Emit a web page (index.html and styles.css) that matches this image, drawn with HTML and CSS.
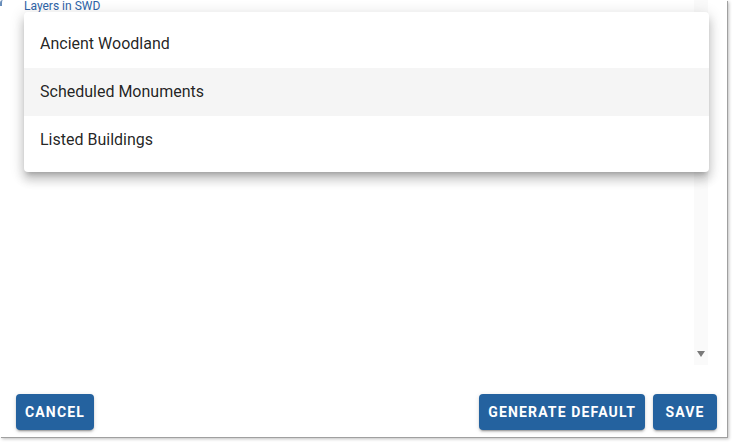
FILE: index.html
```html
<!DOCTYPE html>
<html lang="en">
<head>
<meta charset="utf-8">
<title>Layers in SWD</title>
<link rel="stylesheet" href="styles.css">
</head>
<body>
<div class="dialog">
  <div class="corner-mark"></div>
  <div class="content">
    <div class="field-area">
      <span class="field-label">Layers in SWD</span>
    </div>
    <div class="track">
      <span class="track-arrow"></span>
    </div>
    <ul class="menu">
      <li class="menu-item">Ancient Woodland</li>
      <li class="menu-item is-hover">Scheduled Monuments</li>
      <li class="menu-item">Listed Buildings</li>
    </ul>
  </div>
  <div class="actions">
    <button class="btn">Cancel</button>
    <div class="spacer"></div>
    <button class="btn">Generate Default</button>
    <button class="btn">Save</button>
  </div>
</div>
</body>
</html>
```
FILE: styles.css
```css
html, body {
  margin: 0;
  padding: 0;
  background: #ffffff;
}

body {
  font-family: Roboto, "Liberation Sans", sans-serif;
  width: 734px;
  height: 444px;
  overflow: hidden;
}

.dialog {
  position: relative;
  width: 727px;
  height: 437px;
  background: #ffffff;
  display: flex;
  flex-direction: column;
  box-shadow: 1px 1px 0 #a0a0a0, 2px 2px 3px rgba(0, 0, 0, 0.25);
}

.corner-mark {
  position: absolute;
  left: 0;
  top: 0;
  width: 3px;
  height: 6px;
  border-left: 2px solid #2b5f9e;
  border-top-left-radius: 3px;
  box-sizing: border-box;
  opacity: 0.7;
}

.content {
  position: relative;
  flex: 1;
  display: flex;
  padding: 0 19px 21px 24px;
}

.field-area {
  flex: 1;
}

.field-label {
  display: block;
  font-size: 12px;
  line-height: 12px;
  color: #2e64a8;
}

.track {
  width: 14px;
  background: #fafafa;
  display: flex;
  flex-direction: column;
  justify-content: flex-end;
  align-items: center;
  padding-bottom: 8px;
  box-sizing: border-box;
}

.track-arrow {
  width: 0;
  height: 0;
  border-left: 4px solid transparent;
  border-right: 4px solid transparent;
  border-top: 6px solid #7a7a7a;
}

.menu {
  position: absolute;
  left: 24px;
  top: 12px;
  width: 685px;
  margin: 0;
  padding: 8px 0;
  list-style: none;
  background: #ffffff;
  border-radius: 4px;
  box-shadow: 0 5px 5px -3px rgba(0, 0, 0, 0.2),
              0 8px 10px 1px rgba(0, 0, 0, 0.14),
              0 3px 14px 2px rgba(0, 0, 0, 0.12);
}

.menu-item {
  height: 48px;
  display: flex;
  align-items: center;
  padding: 0 16px 2px;
  box-sizing: border-box;
  font-size: 16px;
  color: rgba(0, 0, 0, 0.87);
}

.menu-item.is-hover {
  background: #f5f5f5;
}

.actions {
  display: flex;
  align-items: center;
  gap: 8px;
  padding: 8px 10px 7px 16px;
}

.spacer {
  flex: 1;
}

.btn {
  height: 36px;
  min-width: 64px;
  padding: 0 9px;
  border: none;
  border-radius: 4px;
  background: #24629f;
  color: #ffffff;
  font-family: Roboto, "Liberation Sans", sans-serif;
  font-size: 14px;
  font-weight: 700;
  letter-spacing: 1.15px;
  text-transform: uppercase;
  box-shadow: 0 3px 1px -2px rgba(0, 0, 0, 0.2),
              0 2px 2px 0 rgba(0, 0, 0, 0.14),
              0 1px 5px 0 rgba(0, 0, 0, 0.12);
}
```
